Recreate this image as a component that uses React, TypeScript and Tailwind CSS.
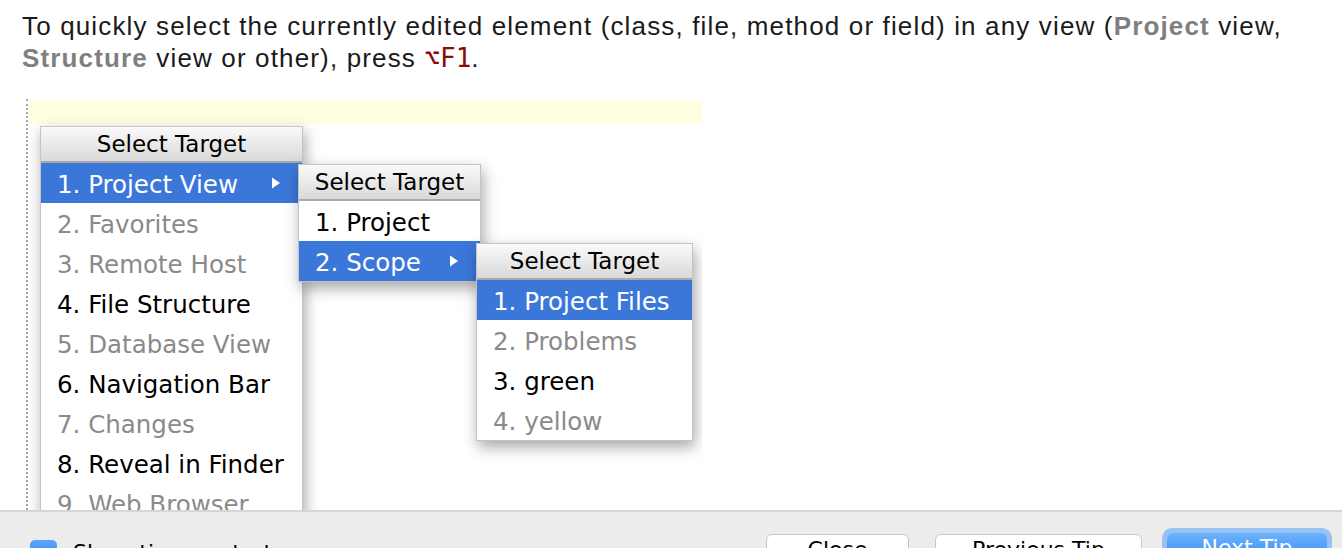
import React from 'react'

type Item = { label: string; on?: boolean; dim?: boolean; sub?: boolean }

const menuOne: Item[] = [
  { label: '1. Project View', on: true, sub: true },
  { label: '2. Favorites', dim: true },
  { label: '3. Remote Host', dim: true },
  { label: '4. File Structure' },
  { label: '5. Database View', dim: true },
  { label: '6. Navigation Bar' },
  { label: '7. Changes', dim: true },
  { label: '8. Reveal in Finder' },
  { label: '9. Web Browser', dim: true },
]

const menuTwo: Item[] = [
  { label: '1. Project' },
  { label: '2. Scope', on: true, sub: true },
]

const menuThree: Item[] = [
  { label: '1. Project Files', on: true },
  { label: '2. Problems', dim: true },
  { label: '3. green' },
  { label: '4. yellow', dim: true },
]

function Arrow() {
  return (
    <svg width="10" height="12" viewBox="0 0 10 12" className="absolute right-[21px] top-[14px]">
      <path d="M1 0.5 L9 6 L1 11.5 Z" fill="#ffffff" />
    </svg>
  )
}

function Popup({ items, className }: { items: Item[]; className: string }) {
  return (
    <div
      className={`absolute bg-white border border-[#c4c4c4] shadow-[2px_6px_14px_rgba(0,0,0,0.35)] ${className}`}
      style={{ fontFamily: '"DejaVu Sans", "Liberation Sans", sans-serif' }}
    >
      <div className="h-[36px] flex items-center justify-center text-[23px] text-black bg-gradient-to-b from-[#fafafa] to-[#d9d9d9] border-b-2 border-[#a9a9a9]">
        Select Target
      </div>
      {items.map((it) => (
        <div
          key={it.label}
          className={`relative h-[40px] flex items-center pt-[4px] pl-[16px] text-[24.5px] whitespace-nowrap ${
            it.on ? 'bg-[#3b77d9] text-white' : it.dim ? 'text-[#8a8a8a]' : 'text-black'
          }`}
        >
          {it.label}
          {it.sub && <Arrow />}
        </div>
      ))}
    </div>
  )
}

export default function App() {
  return (
    <div className="w-[1342px] h-[548px] overflow-hidden bg-white flex flex-col">
      <div
        className="shrink-0 h-[99px] pt-[10px] pl-[22px] text-[26px] leading-[32px] tracking-[1.15px] text-[#1a1a1a]"
        style={{ fontFamily: '"Liberation Sans", Arial, sans-serif' }}
      >
        <p className="whitespace-nowrap">
          To quickly select the currently edited element (class, file, method or field) in any view (
          <b className="text-[#7f7f7f]">Project</b> view,
        </p>
        <p className="whitespace-nowrap">
          <b className="text-[#7f7f7f]">Structure</b> view or other), press{' '}
          <span
            className="text-[#8b0b0b] tracking-normal"
            style={{ fontFamily: '"DejaVu Sans Mono", "Liberation Mono", monospace' }}
          >
            ⌥F1
          </span>
          .
        </p>
      </div>

      <div className="shrink-0 relative h-[411px] w-[702px] overflow-hidden flex">
        <div className="w-[26px]" />
        <div className="w-0 border-l-2 border-dotted border-[#a8a8a8]" />
        <div className="flex-1">
          <div className="mt-[1px] h-[24px] bg-[#fefee3]" />
        </div>
        <Popup items={menuOne} className="left-[40px] top-[27px] w-[263px]" />
        <Popup items={menuTwo} className="left-[298px] top-[65px] w-[183px]" />
        <Popup items={menuThree} className="left-[476px] top-[144px] w-[217px]" />
      </div>

      <div
        className="shrink-0 h-[38px] bg-[#ececec] border-t-2 border-[#d6d6d6] relative"
        style={{ fontFamily: '"DejaVu Sans", "Liberation Sans", sans-serif' }}
      >
        <div className="flex items-start pt-[28px] pl-[30px] gap-[16px]">
          <div className="shrink-0 w-[27px] h-[27px] rounded-[5px] bg-gradient-to-b from-[#5aa7fb] to-[#1f78f0] flex items-center justify-center">
            <svg width="16" height="16" viewBox="0 0 16 16">
              <path d="M3 8.5 L6.5 12 L13 3.5" stroke="#fff" strokeWidth="2.4" fill="none" />
            </svg>
          </div>
          <span className="text-[22px] leading-[26px] text-black whitespace-nowrap">Show tips on startup</span>
        </div>
        <div className="absolute left-[766px] top-[22px] flex items-start">
          <div className="w-[143px] h-[34px] rounded-[6px] bg-white border border-[#c6c6c6] flex justify-center pt-[3px] text-[22px] leading-[24px] text-black">
            Close
          </div>
          <div className="ml-[26px] w-[207px] h-[34px] rounded-[6px] bg-white border border-[#c6c6c6] flex justify-center pt-[3px] text-[22px] leading-[24px] text-black">
            Previous Tip
          </div>
          <div className="ml-[20px] -mt-[6px] p-[5px] rounded-[10px] bg-[#98c2f4]">
            <div className="w-[160px] h-[34px] rounded-[6px] bg-gradient-to-b from-[#6cb3fc] to-[#2680f3] flex justify-center pt-[3px] text-[22px] leading-[24px] text-white">
              Next Tip
            </div>
          </div>
        </div>
      </div>
    </div>
  )
}
